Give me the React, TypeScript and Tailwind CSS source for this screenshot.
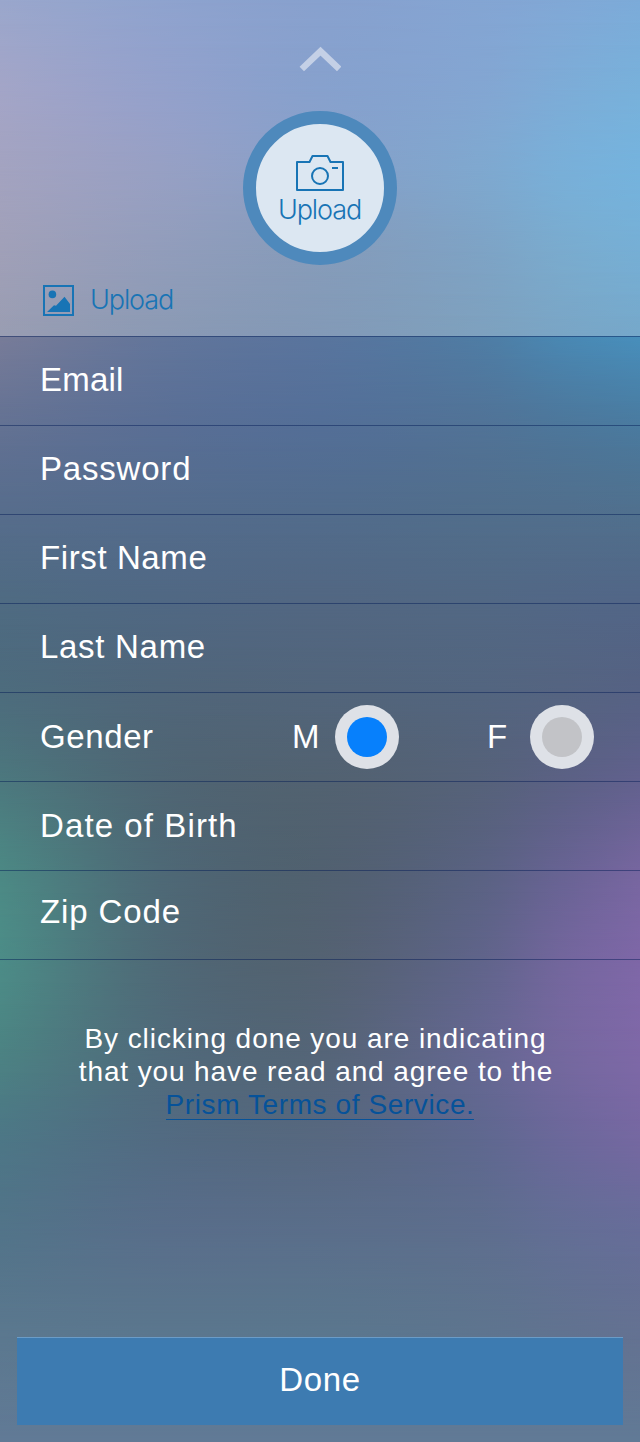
import { useState, type ReactNode } from "react";
import { clsx } from "clsx";

// Colour mesh for the backdrop: each row holds one colour per stop in `stops`.
type RGB = [number, number, number];
type MeshRow = { y: number; colors: RGB[] };

const stops = [0, 160, 320, 480, 560, 640];

const headerMesh: MeshRow[] = [
  { y: 0, colors: [[154, 167, 204], [143, 163, 206], [136, 161, 206], [132, 165, 211], [129, 168, 214], [124, 171, 217]] },
  { y: 90, colors: [[163, 165, 199], [148, 161, 203], [135, 161, 205], [131, 166, 210], [125, 172, 215], [120, 177, 219]] },
  { y: 170, colors: [[163, 163, 192], [151, 160, 196], [136, 160, 200], [127, 168, 207], [121, 175, 216], [117, 179, 221]] },
  { y: 250, colors: [[160, 160, 184], [146, 157, 187], [134, 156, 187], [126, 163, 197], [122, 171, 206], [118, 175, 213]] },
  { y: 337, colors: [[153, 157, 178], [139, 154, 180], [131, 154, 183], [126, 161, 190], [122, 165, 197], [118, 168, 202]] },
];

const bodyMesh: MeshRow[] = [
  { y: 337, colors: [[120, 124, 153], [99, 118, 155], [89, 117, 158], [79, 125, 165], [74, 136, 179], [72, 143, 188]] },
  { y: 425, colors: [[100, 114, 147], [90, 111, 149], [84, 111, 151], [81, 115, 151], [77, 119, 155], [74, 123, 160]] },
  { y: 514, colors: [[87, 109, 140], [84, 108, 140], [82, 108, 140], [81, 110, 140], [81, 111, 141], [80, 112, 142]] },
  { y: 603, colors: [[79, 107, 130], [80, 104, 131], [82, 103, 130], [82, 104, 132], [82, 103, 134], [82, 102, 135]] },
  { y: 692, colors: [[77, 108, 125], [80, 102, 122], [82, 101, 123], [83, 101, 127], [85, 100, 129], [86, 98, 132]] },
  { y: 781, colors: [[76, 120, 126], [79, 102, 116], [82, 98, 113], [86, 98, 122], [91, 97, 132], [98, 97, 142]] },
  { y: 870, colors: [[76, 136, 132], [78, 105, 118], [81, 97, 112], [90, 98, 130], [103, 99, 146], [118, 102, 159]] },
  { y: 960, colors: [[76, 140, 135], [79, 106, 119], [84, 98, 114], [96, 100, 138], [114, 102, 156], [126, 103, 167]] },
  { y: 1050, colors: [[76, 131, 131], [80, 107, 123], [85, 101, 120], [101, 103, 145], [116, 104, 158], [126, 104, 167]] },
  { y: 1140, colors: [[77, 119, 134], [82, 107, 130], [87, 104, 128], [95, 104, 143], [107, 104, 154], [117, 104, 161]] },
  { y: 1230, colors: [[82, 116, 137], [88, 110, 138], [90, 110, 138], [94, 110, 142], [99, 110, 149], [103, 109, 153]] },
  { y: 1337, colors: [[91, 120, 143], [91, 119, 142], [91, 119, 142], [94, 117, 143], [97, 115, 144], [100, 114, 146]] },
  { y: 1442, colors: [[97, 122, 150], [97, 122, 150], [97, 122, 150], [97, 122, 150], [97, 122, 150], [97, 122, 150]] },
];

// Cubic Hermite interpolation through unevenly spaced knots.
function spline(xs: number[], values: number[], x: number): number {
  const slope = (i: number) => {
    const a = Math.max(i - 1, 0);
    const b = Math.min(i + 1, xs.length - 1);
    return (values[b] - values[a]) / (xs[b] - xs[a]);
  };
  let i = 0;
  while (i < xs.length - 2 && x > xs[i + 1]) i += 1;
  const h = xs[i + 1] - xs[i];
  const t = (x - xs[i]) / h;
  const u = 1 - t;
  return (
    (1 + 2 * t) * u * u * values[i] +
    t * u * u * h * slope(i) +
    t * t * (3 - 2 * t) * values[i + 1] -
    t * t * u * h * slope(i + 1)
  );
}

function refine(rows: MeshRow[]): MeshRow[] {
  const ys = rows.map((row) => row.y);
  const columns = Array.from({ length: 33 }, (_, i) => i * 20);
  const fineYs = ys.flatMap((y, i) =>
    i === ys.length - 1 ? [y] : [0, 1, 2, 3].map((k) => y + ((ys[i + 1] - y) * k) / 4),
  );
  return fineYs.map((y) => {
    const knots = stops.map((_, s) =>
      [0, 1, 2].map((ch) => spline(ys, rows.map((row) => row.colors[s][ch]), y)),
    );
    const colors = columns.map(
      (x) => [0, 1, 2].map((ch) => spline(stops, knots.map((k) => k[ch]), x)) as RGB,
    );
    return { y, colors };
  });
}

const fineHeader = refine(headerMesh);
const fineBody = refine(bodyMesh);

function Mesh({ rows }: { rows: MeshRow[] }) {
  const start = rows[0].y;
  return (
    <div className="absolute inset-0 overflow-hidden">
      {rows.map((row, i) => {
        const previous = i > 0 ? rows[i - 1].y - start : 0;
        const fade = `linear-gradient(to bottom, transparent, black ${row.y - start - previous}px)`;
        const colors = row.colors.map((c) => `rgb(${c.map((v) => v.toFixed(1)).join(",")})`);
        return (
          <div
            key={row.y}
            className="absolute inset-x-0 bottom-0"
            style={{
              top: previous,
              backgroundImage: `linear-gradient(to right, ${colors.join(", ")})`,
              maskImage: i > 0 ? fade : undefined,
            }}
          />
        );
      })}
    </div>
  );
}

function CameraIcon() {
  return (
    <svg width="50" height="38" viewBox="0 0 50 38" fill="none" stroke="#1874b5" strokeWidth="2" strokeLinejoin="round">
      <path d="M2 9H14.5L17.5 3H32.5L35.5 9H48V37H2Z" />
      <circle cx="25" cy="23" r="8" />
      <path d="M37 15H43" />
    </svg>
  );
}

function PictureIcon() {
  return (
    <svg width="31" height="31" viewBox="0 0 31 31" fill="#1874b5">
      <rect x="1" y="1" width="29" height="29" fill="none" stroke="#1874b5" strokeWidth="2" />
      <circle cx="9.4" cy="9.4" r="3.8" />
      <path d="M4 27L11 20.3L13 20.8L21.5 11.8L27 19V27Z" />
    </svg>
  );
}

function Row({ label, className, children }: { label: string; className: string; children?: ReactNode }) {
  return (
    <div className="flex h-[89px] items-center border-t border-[#00185573] pl-10">
      <span className={clsx("whitespace-nowrap", className)}>{label}</span>
      {children}
    </div>
  );
}

function Radio({ label, checked, onSelect }: { label: string; checked: boolean; onSelect: () => void }) {
  return (
    <button
      type="button"
      role="radio"
      aria-checked={checked}
      aria-label={label}
      onClick={onSelect}
      className="flex size-16 shrink-0 items-center justify-center rounded-full bg-[#dee1e7]"
    >
      <span className={clsx("size-10 rounded-full", checked ? "bg-[#0780fc]" : "bg-[#c2c3c7]")} />
    </button>
  );
}

export default function App() {
  const [gender, setGender] = useState("M");
  return (
    <main className="flex h-[1442px] w-[640px] flex-col font-['Liberation_Sans',sans-serif] text-white">
      <header className="relative h-[336px]">
        <Mesh rows={fineHeader} />
        <div className="relative flex flex-col items-center pt-[46px]">
          <svg width="42" height="26" viewBox="0 0 42 26" fill="none" stroke="#c4d0e6" strokeWidth="6.4">
            <path d="M2.8 23L21.5 5.2L40.2 23" />
          </svg>
          <button
            type="button"
            className="mt-[39px] flex size-[154px] flex-col items-center rounded-full border-[13px] border-[#4e89bc] bg-[#dce7f2] pt-[29px]"
          >
            <CameraIcon />
            <span className="mt-[3px] mr-px font-['Inter',sans-serif] text-[27px] leading-[31px] font-light tracking-[-1.1px] text-[#1874b5]">
              Upload
            </span>
          </button>
          <div className="mt-5 flex w-full items-center gap-4 pl-[43px]">
            <PictureIcon />
            <span className="pb-0.5 font-['Inter',sans-serif] text-[27px] leading-[29px] font-light tracking-[-1.1px] text-[#1874b5]">
              Upload
            </span>
          </div>
        </div>
      </header>
      <section className="relative flex h-[1106px] flex-col">
        <Mesh rows={fineBody} />
        <div className="relative border-b border-[#00185573] text-[33px] leading-10">
          <Row label="Email" className="pb-[3px] tracking-[0.2px]" />
          <Row label="Password" className="pb-[3px] tracking-[0.8px]" />
          <Row label="First Name" className="pb-[3px] tracking-[0.6px]" />
          <Row label="Last Name" className="pb-[3px] tracking-[0.7px]" />
          <Row label="Gender" className="w-[252px] pb-px tracking-[0.6px]">
            <span className="w-[43px] pb-px">M</span>
            <Radio label="M" checked={gender === "M"} onSelect={() => setGender("M")} />
            <span className="ml-[88px] w-[43px] pb-px">F</span>
            <Radio label="F" checked={gender === "F"} onSelect={() => setGender("F")} />
          </Row>
          <Row label="Date of Birth" className="pb-px tracking-[1.1px]" />
          <Row label="Zip Code" className="pb-[7px] tracking-[0.9px]" />
        </div>
        <p className="relative mt-[62px] text-center text-[28px] leading-[33px]">
          <span className="block pr-[9px] tracking-[0.93px]">By clicking done you are indicating</span>
          <span className="block pr-[8px] tracking-[0.88px]">that you have read and agree to the</span>
          <a className="inline-block h-[32px] border-b border-[#065299] tracking-[0.6px] text-[#065299]">
            Prism Terms of Service.
          </a>
        </p>
        <button
          type="button"
          className="relative mx-[17px] mt-auto mb-[17px] h-[88px] border-t border-[#6b9cc7] bg-[#3d7bb1] pb-1 text-[33px] tracking-[0.7px]"
        >
          Done
        </button>
      </section>
    </main>
  );
}
